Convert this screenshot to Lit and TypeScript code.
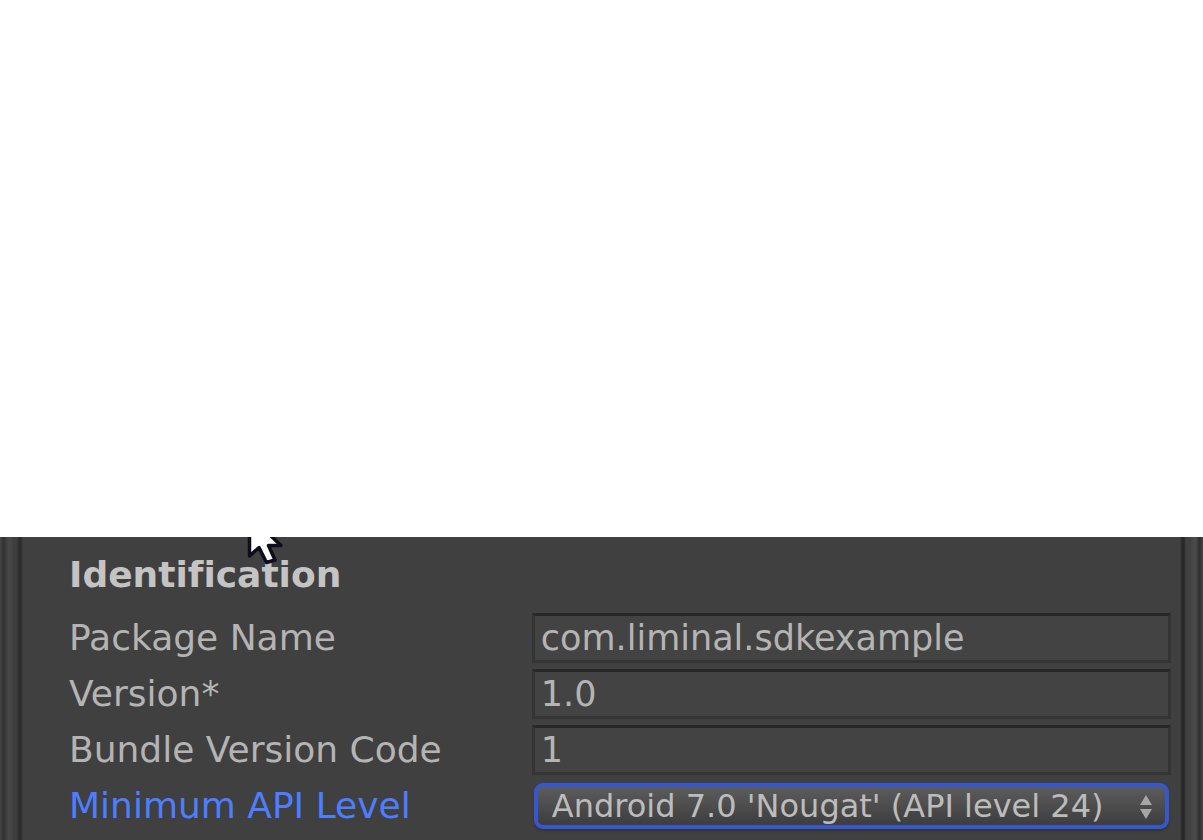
import { LitElement, html, css } from "lit";
import { customElement } from "lit/decorators.js";

@customElement("app-root")
export class AppRoot extends LitElement {
  static styles = css`
    :host {
      display: flex;
      flex-direction: column;
      min-height: 100vh;
      background: #fff;
      font-family: "DejaVu Sans", Verdana, sans-serif;
      font-variant-ligatures: none;
      color: #b4b4b4;
    }
    .blank {
      flex: 1;
    }
    .inspector {
      position: relative;
      display: grid;
      grid-template-columns: 23px minmax(0, 1fr) 23px;
      background: #404040;
      overflow: hidden;
    }
    .edge-left {
      background: linear-gradient(
        to right,
        #414141 0 1px,
        #333 3px 4px,
        #464646 8px 11px,
        #3c3c3c 14px,
        #404040 16px,
        #2d2d2d 19px 21px,
        #404040 23px
      );
    }
    .edge-right {
      background: linear-gradient(
        to right,
        #404040 0,
        #292929 2px 4px,
        #404040 6px 10px,
        #494949 14px 16px,
        #303030 19px 20px,
        #424242 22px
      );
    }
    .section {
      padding: 16px 9px 9px 46px;
    }
    .title {
      margin: 0;
      font-size: 36px;
      line-height: 44px;
      font-weight: 700;
      color: #c4c4c4;
    }
    .rows {
      display: grid;
      gap: 6px;
      padding-top: 16px;
    }
    .row {
      display: grid;
      grid-template-columns: 42% minmax(0, 1fr);
      align-items: center;
      height: 50px;
    }
    .label {
      font-size: 36px;
      line-height: 50px;
      white-space: nowrap;
    }
    .active {
      color: #4c7eff;
    }
    .field {
      box-sizing: border-box;
      width: 100%;
      height: 50px;
      margin: 0;
      padding: 0 6px;
      border: 3px solid #343434;
      border-top-color: #272727;
      border-radius: 0;
      background: #434343;
      color: inherit;
      font-family: inherit;
      font-size: 35px;
      outline: none;
    }
    .picker {
      position: relative;
      padding: 0 2px;
    }
    .select {
      display: block;
      box-sizing: border-box;
      width: 100%;
      height: 46px;
      padding: 0 48px 0 14px;
      appearance: none;
      border: 4px solid #3658cc;
      border-radius: 9px;
      background: linear-gradient(#5c5c5c, #3d3d3d);
      color: #bcbcbc;
      font-family: inherit;
      font-size: 32px;
      line-height: 38px;
      outline: none;
      box-shadow: 0 2px 2px #343434;
    }
    .arrows {
      position: absolute;
      right: 19px;
      top: 12px;
      width: 12px;
      height: 24px;
      pointer-events: none;
    }
    .pointer {
      position: absolute;
      left: 246px;
      top: 0;
      width: 40px;
      height: 28px;
      pointer-events: none;
    }
  `;

  private fields = [
    { id: "package", label: "Package Name", value: "com.liminal.sdkexample" },
    { id: "version", label: "Version*", value: "1.0" },
    { id: "bundle", label: "Bundle Version Code", value: "1" },
  ];

  render() {
    return html`
      <div class="blank"></div>
      <main class="inspector">
        <div class="edge-left"></div>
        <section class="section">
          <h2 class="title">Identification</h2>
          <div class="rows">
            ${this.fields.map(
              (f) => html`
                <div class="row">
                  <label class="label" for=${f.id}>${f.label}</label>
                  <input class="field" id=${f.id} type="text" spellcheck="false" .value=${f.value} />
                </div>
              `
            )}
            <div class="row">
              <label class="label active" for="api">Minimum API Level</label>
              <div class="picker">
                <select class="select" id="api">
                  <option>Android 7.0 'Nougat' (API level 24)</option>
                </select>
                <svg class="arrows" viewBox="0 0 12 24" aria-hidden="true">
                  <path d="M6 0 L12 10 H0 Z M0 14 H12 L6 24 Z" fill="#a6a6a6" />
                </svg>
              </div>
            </div>
          </div>
        </section>
        <div class="edge-right"></div>
        <svg class="pointer" viewBox="0 0 40 28" aria-hidden="true">
          <path
            d="M3.5 -4 V19 L13 10.5 L20.5 25.5 L29 23 L22.5 8.5 H35 L22 -4 Z"
            fill="#fff"
            stroke="#0d0d1c"
            stroke-width="3.5"
            stroke-linejoin="round"
          />
        </svg>
      </main>
    `;
  }
}
